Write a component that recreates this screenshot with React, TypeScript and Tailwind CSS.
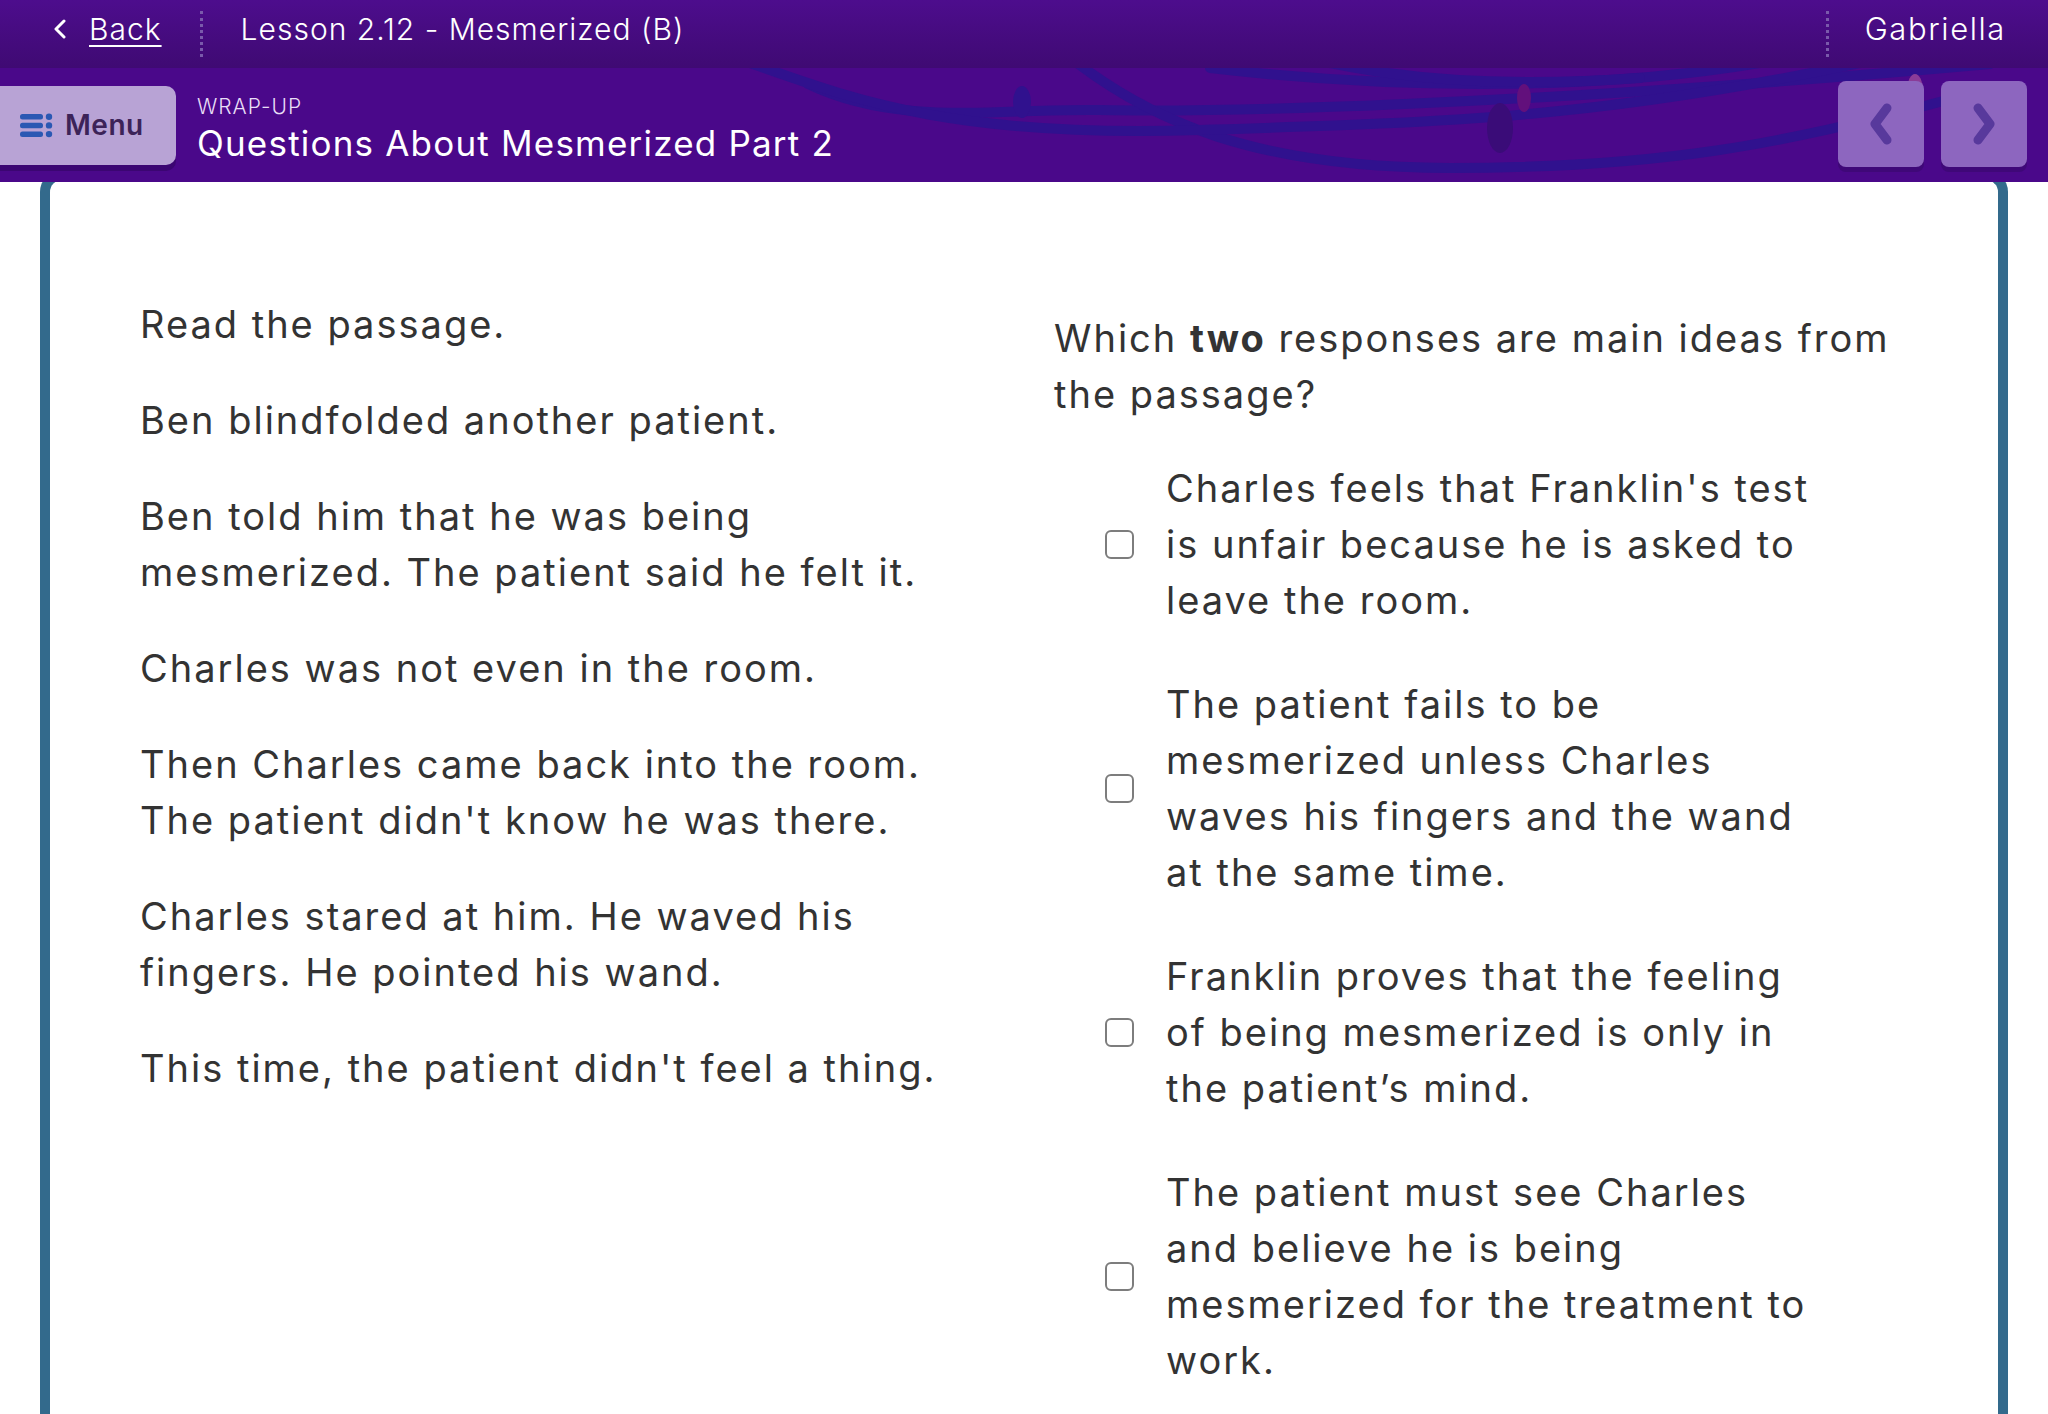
import React from "react";

const passage = [
  "Read the passage.",
  "Ben blindfolded another patient.",
  "Ben told him that he was being mesmerized. The patient said he felt it.",
  "Charles was not even in the room.",
  "Then Charles came back into the room. The patient didn't know he was there.",
  "Charles stared at him. He waved his fingers. He pointed his wand.",
  "This time, the patient didn't feel a thing.",
];

const options = [
  "Charles feels that Franklin's test is unfair because he is asked to leave the room.",
  "The patient fails to be mesmerized unless Charles waves his fingers and the wand at the same time.",
  "Franklin proves that the feeling of being mesmerized is only in the patient\u2019s mind.",
  "The patient must see Charles and believe he is being mesmerized for the treatment to work.",
];

const Dots = () => (
  <div className="h-[46px] border-l-[3px] border-dotted border-[#7a5aab]" />
);

const MenuIcon = () => (
  <svg width="33" height="25" viewBox="0 0 33 25" fill="#2a58b3">
    <rect x="0" y="1" width="23" height="5.5" rx="2.5" />
    <rect x="0" y="9.7" width="23" height="5.5" rx="2.5" />
    <rect x="0" y="18.4" width="23" height="5.5" rx="2.5" />
    <circle cx="29" cy="3.7" r="3.2" />
    <circle cx="29" cy="12.4" r="3.2" />
    <circle cx="29" cy="21.1" r="3.2" />
  </svg>
);

const NavButton = ({ dir }: { dir: "prev" | "next" }) => (
  <button className="flex h-[86px] w-[86px] items-center justify-center rounded-[8px] bg-[#8d66bf] shadow-[0_5px_0_#3f0878]">
    <svg width="30" height="48" viewBox="0 0 30 48" fill="none">
      <path
        d={dir === "prev" ? "M21 8 L9 24 L21 40" : "M9 8 L21 24 L9 40"}
        stroke="#58399c"
        strokeWidth="9"
        strokeLinecap="round"
        strokeLinejoin="round"
      />
    </svg>
  </button>
);

const Swirls = () => (
  <svg
    className="pointer-events-none absolute inset-0 h-full w-full"
    viewBox="0 0 2048 114"
    preserveAspectRatio="none"
    fill="none"
  >
    <g stroke="#30118e" strokeWidth="10" strokeLinecap="round">
      <path d="M808 16 C 900 60, 1000 40, 1100 42 S 1500 40, 1990 -4" />
      <path d="M1077 -5 C 1150 50, 1250 100, 1450 100 S 1780 80, 1990 20" />
      <path d="M1210 0 C 1400 22, 1600 22, 1760 -5" />
      <path d="M750 -5 C 850 30, 950 70, 1200 62 S 1600 50, 1860 -5" />
      <path d="M1330 -5 C 1400 10, 1500 20, 1640 10" />
    </g>
    <ellipse cx="1022" cy="34" rx="9" ry="16" fill="#30118e" />
    <ellipse cx="1500" cy="60" rx="13" ry="25" fill="#3a0c78" />
    <ellipse cx="1524" cy="30" rx="7" ry="14" fill="#62107c" />
    <ellipse cx="1915" cy="22" rx="8" ry="16" fill="#8a3c98" />
  </svg>
);

export default function App() {
  return (
    <div className="min-h-screen bg-white font-['Inter','Noto_Sans',sans-serif] text-[#333333]">
      <header className="relative z-10">
        <div className="flex h-[68px] items-center bg-gradient-to-b from-[#4d0d8d] to-[#3f0a73] pb-[10px] text-white">
          <div className="flex items-center pl-[53px]">
            <svg width="14" height="20" viewBox="0 0 14 20" fill="none">
              <path d="M11 2 L3 10 L11 18" stroke="white" strokeWidth="3" strokeLinecap="round" strokeLinejoin="round" />
            </svg>
            <a
              href="#"
              className="ml-[22px] text-[30px] font-light tracking-[1px] underline underline-offset-[5px] decoration-[2px]"
            >
              Back
            </a>
          </div>
          <div className="ml-[38px] mt-[10px]">
            <Dots />
          </div>
          <div className="ml-[38px] text-[30px] font-light tracking-[1px]">Lesson 2.12 - Mesmerized (B)</div>
          <div className="ml-auto mt-[10px]">
            <Dots />
          </div>
          <div className="ml-[36px] mr-[42px] text-[31px] font-light tracking-[1.6px]">Gabriella</div>
        </div>
        <div className="relative flex h-[114px] items-center overflow-hidden bg-[#4a088a]">
          <Swirls />
          <button className="relative flex h-[79px] w-[176px] items-center gap-[12px] rounded-r-[10px] bg-[#b8a3d5] pl-[20px] shadow-[0_6px_0_#3b0672]">
            <MenuIcon />
            <span className="text-[28px] font-semibold tracking-[0.5px] text-[#3c2358]">Menu</span>
          </button>
          <div className="relative ml-[21px] mt-[8px] flex flex-col">
            <span className="text-[21px] font-light leading-[26px] tracking-[1px] text-[#e8def6]">WRAP-UP</span>
            <span className="mt-[2px] text-[35px] leading-[42px] tracking-[1.2px] text-white">
              Questions About Mesmerized Part 2
            </span>
          </div>
          <div className="relative ml-auto mr-[21px] flex gap-[17px] self-start pt-[13px]">
            <NavButton dir="prev" />
            <NavButton dir="next" />
          </div>
        </div>
      </header>

      <main className="relative -mt-[12px] mx-[40px] min-h-[1260px] rounded-t-[22px] border-[10px] border-b-0 border-[#336a8c] bg-white">
        <div className="grid grid-cols-[820px_852px] gap-x-[94px] pl-[90px] pt-[116px] text-[38px] leading-[56px] tracking-[2px]">
          <div className="flex flex-col gap-[40px]">
            {passage.map((p) => (
              <p key={p}>{p}</p>
            ))}
          </div>
          <div className="pt-[14px]">
            <p>
              Which <b className="font-bold">two</b> responses are main ideas from the passage?
            </p>
            <div className="mt-[38px] flex flex-col gap-[48px]">
              {options.map((o) => (
                <label key={o} className="flex items-center">
                  <span className="ml-[51px] h-[29px] w-[29px] shrink-0 rounded-[6px] border-[2px] border-[#7d7d7d] bg-white" />
                  <span className="ml-[32px] w-[660px]">{o}</span>
                </label>
              ))}
            </div>
          </div>
        </div>
      </main>
    </div>
  );
}
